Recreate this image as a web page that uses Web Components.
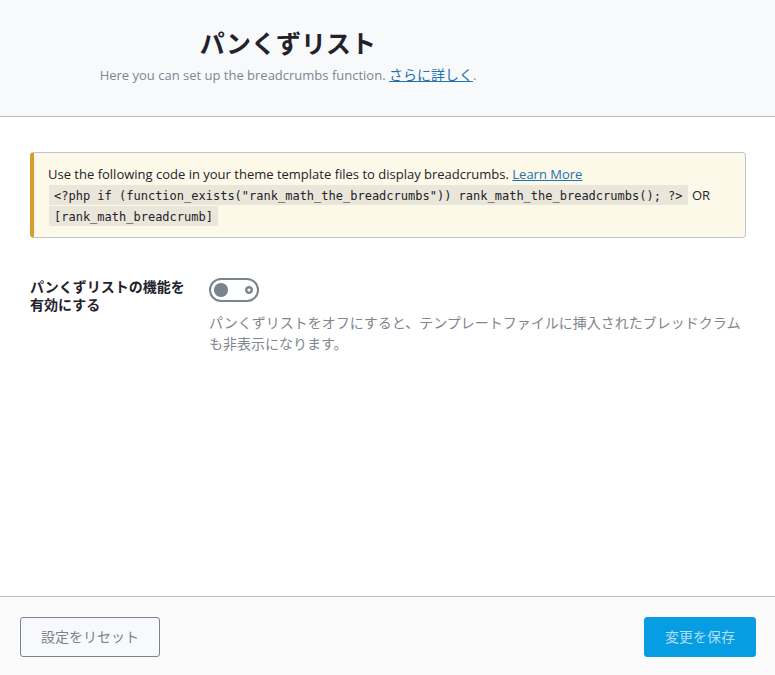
<!DOCTYPE html>
<html lang="ja">
<head>
<meta charset="utf-8">
<title>パンくずリスト</title>
<style>
html, body { margin: 0; }
body { background: #fff; color: #23222b; font: 14px/21px "Open Sans", "Noto Sans CJK JP", sans-serif; }
</style>
</head>
<body>
<settings-page>
  <page-header slot="header" heading="パンくずリスト">Here you can set up the breadcrumbs function. <text-link>さらに詳しく</text-link>.</page-header>
  <notice-box>Use the following code in your theme template files to display breadcrumbs. <text-link>Learn More</text-link><br><code-chip>&lt;?php if (function_exists("rank_math_the_breadcrumbs")) rank_math_the_breadcrumbs(); ?&gt;</code-chip> OR <code-chip>[rank_math_breadcrumb]</code-chip></notice-box>
  <toggle-field label="パンくずリストの機能を有効にする">パンくずリストをオフにすると、テンプレートファイルに挿入されたブレッドクラムも非表示になります。</toggle-field>
  <action-button slot="footer">設定をリセット</action-button>
  <action-button slot="footer" primary>変更を保存</action-button>
</settings-page>
<script>
const define = (name, markup, setup) => {
  const template = document.createElement('template');
  template.innerHTML = markup;
  customElements.define(name, class extends HTMLElement {
    constructor() {
      super();
      this.attachShadow({ mode: 'open' }).append(template.content.cloneNode(true));
      if (setup) setup(this, this.shadowRoot);
    }
  });
};

define('settings-page', `
<style>
  :host { display: flex; flex-direction: column; min-height: 100vh; }
  main { flex: 1; padding: 35px 29px 30px 30px; }
  footer { display: flex; justify-content: space-between; padding: 20px 19px 18px 20px; border-top: 1px solid #b5bfc9; background: #fbfbfc; }
</style>
<slot name="header"></slot>
<main><slot></slot></main>
<footer><slot name="footer"></slot></footer>`);

define('page-header', `
<style>
  :host { display: block; padding: 26px 199px 30px 0; border-bottom: 1px solid #b5bfc9; background: #f8f9fb; text-align: center; }
  h1 { margin: 0 0 3px; font-size: 25px; line-height: 35px; font-weight: 700; }
  p { margin: 0; color: #7f868d; font-size: 13px; }
</style>
<header><h1></h1><p><slot></slot></p></header>`,
(host, root) => { root.querySelector('h1').textContent = host.getAttribute('heading'); });

define('text-link', `
<style>
  :host { display: inline; }
  a { color: #2271b1; text-decoration: underline; }
  :host-context(page-header) a { font-size: 14px; }
</style>
<a href="#"><slot></slot></a>`);

define('notice-box', `
<style>
  :host { display: block; padding: 11px 14px 10px; border: 1px solid #c3c4c7; border-left: 4px solid #d99c31; border-radius: 4px; background: #fdf9e8; font-size: 13px; }
</style>
<slot></slot>`);

define('code-chip', `
<style>
  :host { display: inline; }
  code { margin: 0 1px; padding: 4px 5px 2px; background: #eae6d9; font: 12px "DejaVu Sans Mono", monospace; }
</style>
<code><slot></slot></code>`);

define('toggle-field', `
<style>
  :host { display: grid; grid-template-columns: 155px 1fr; column-gap: 24px; margin-top: 40px; }
  label { font-weight: 700; line-height: 18px; }
  input { display: block; box-sizing: border-box; width: 50px; height: 24px; margin: 0 0 10px; border: 2px solid #7b848c; border-radius: 12px; appearance: none;
    background: radial-gradient(circle at 10px 10px, #7b848c 6.5px, transparent 7.5px), radial-gradient(circle at 38px 10px, transparent 1px, #7b848c 2px 3.5px, transparent 4.5px), #fff; }
  p { margin: 0; color: #7f868d; }
</style>
<label for="toggle"></label>
<div><input id="toggle" type="checkbox" role="switch" aria-describedby="hint"><p id="hint"><slot></slot></p></div>`,
(host, root) => { root.querySelector('label').textContent = host.getAttribute('label'); });

define('action-button', `
<style>
  :host { display: block; }
  button { display: block; height: 40px; padding: 0 20px 2px; border: 1px solid #7b848e; border-radius: 3px; background: #f8f9fc; color: #7b8188; font: inherit; cursor: pointer; }
  :host([primary]) button { border-color: #069de3; background: #069de3; color: #b0dff5; }
</style>
<button type="button"><slot></slot></button>`);
</script>
</body>
</html>
